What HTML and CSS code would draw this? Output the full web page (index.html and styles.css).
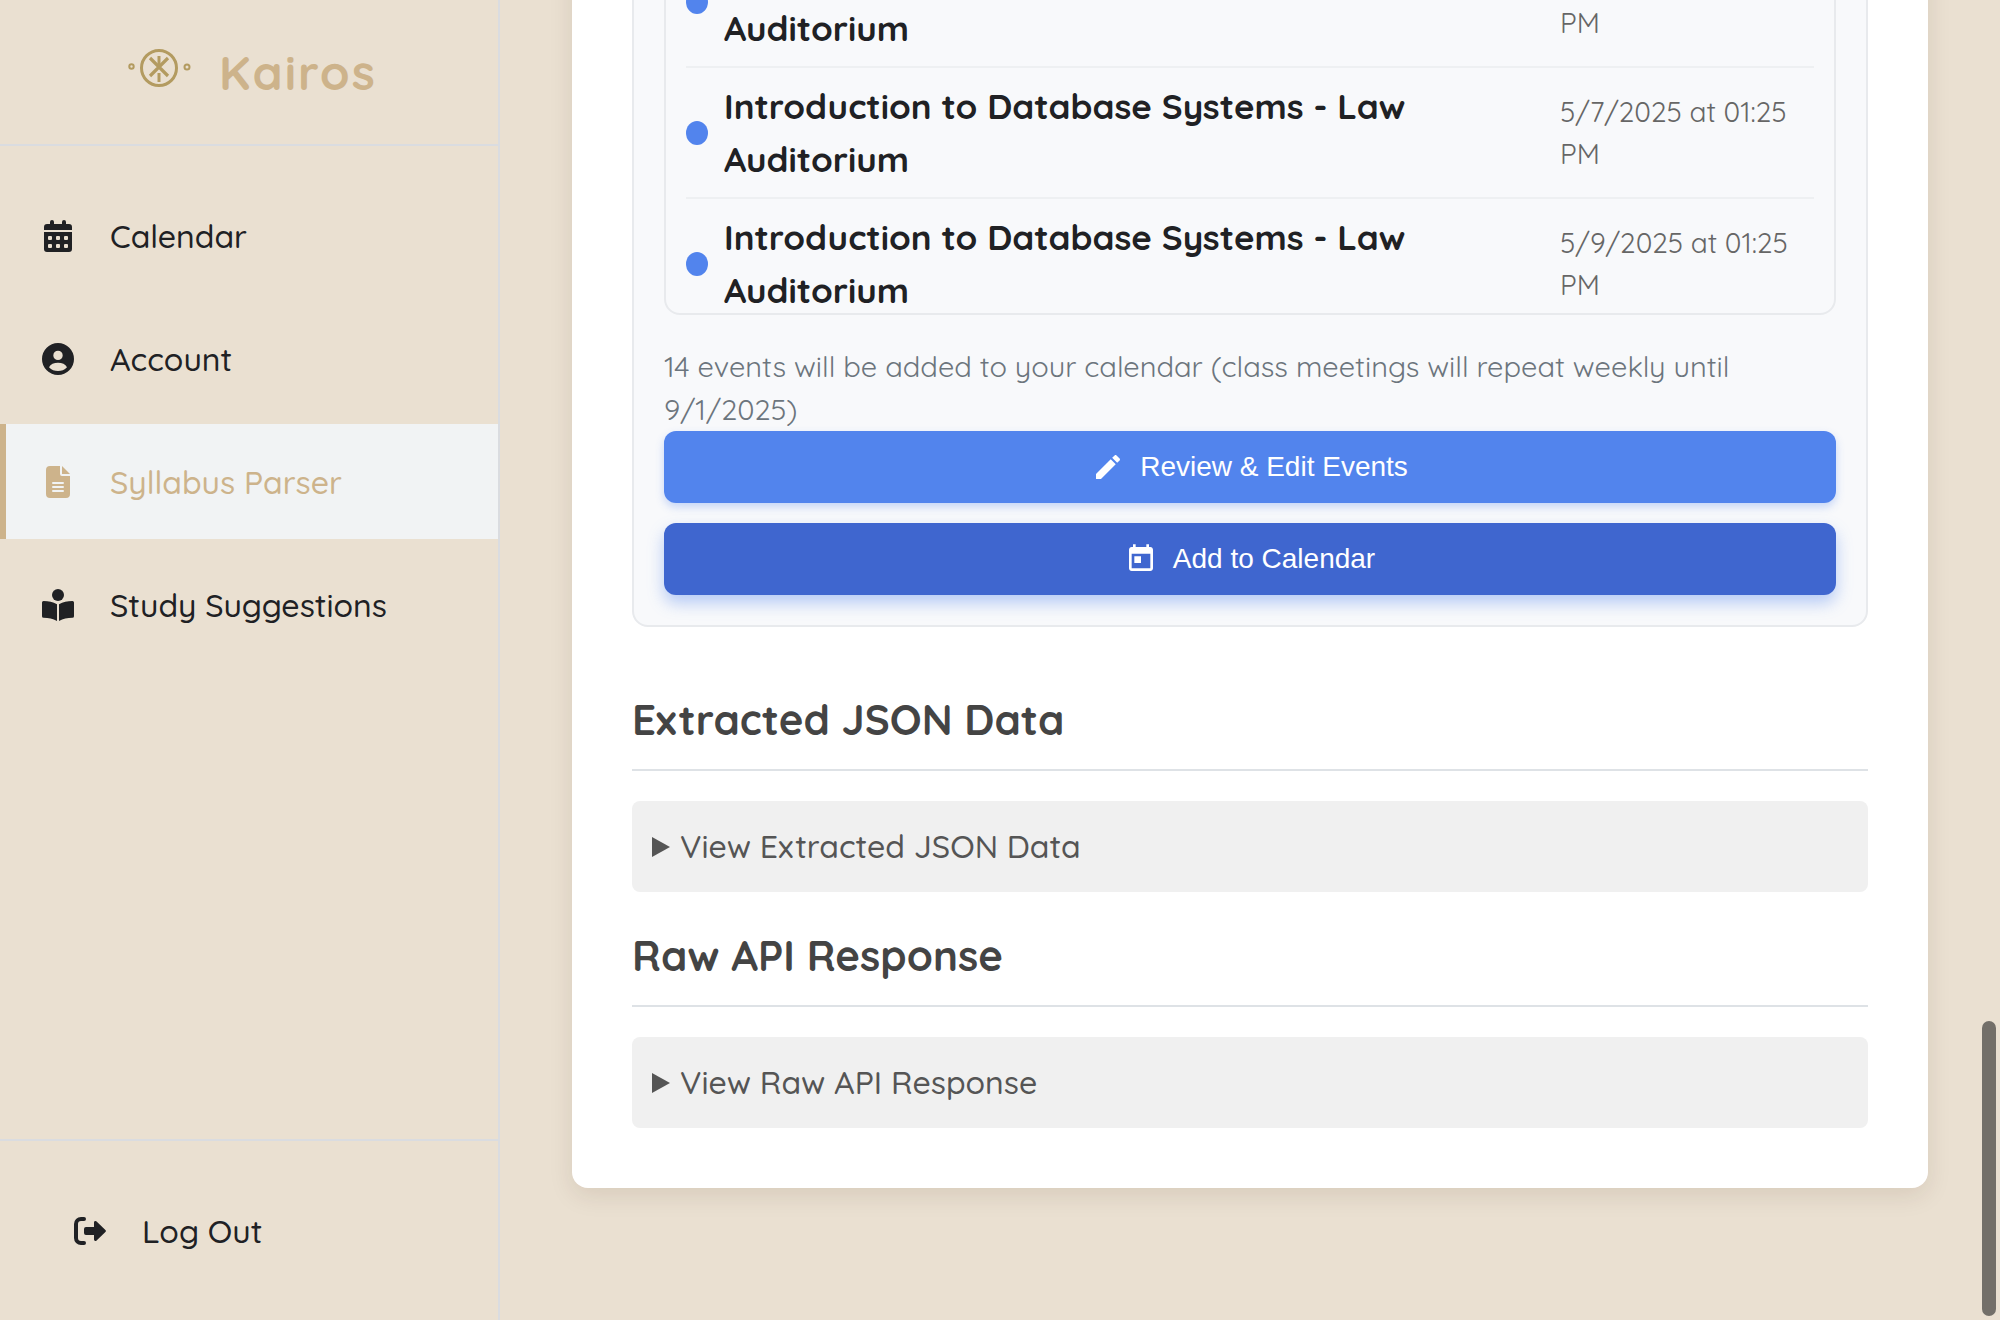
FILE: index.html
```html
<!DOCTYPE html>
<html lang="en">
<head>
<meta charset="utf-8">
<meta name="viewport" content="width=device-width, initial-scale=1">
<title>Kairos</title>
<link rel="stylesheet" href="styles.css">
</head>
<body>
<div class="app">
  <aside class="sidebar">
    <header class="brand">
      <svg class="brand-logo" viewBox="0 0 64 40" aria-hidden="true">
        <g fill="none" stroke="#b39b60">
          <circle cx="32" cy="20" r="17.5" stroke-width="3"/>
          <circle cx="4.5" cy="18.5" r="2.2" stroke-width="2"/>
          <circle cx="60" cy="19" r="2.5" stroke-width="2"/>
          <path d="M23 10 L41 28 M41 10 L23 28" stroke-width="3.2"/>
          <path d="M32 8 V19 M32 25 V34" stroke-width="3"/>
        </g>
      </svg>
      <span class="brand-name">Kairos</span>
    </header>
    <nav class="nav">
      <a class="nav-link" href="#calendar">
        <span class="nav-icon"><svg width="28" height="32" viewBox="0 0 28 32" fill="currentColor" aria-hidden="true"><path d="M6 4V2a2 2 0 0 1 4 0v2h8V2a2 2 0 0 1 4 0v2h3a3 3 0 0 1 3 3v3H0V7a3 3 0 0 1 3-3z"/><path fill-rule="evenodd" d="M0 12h28v17a3 3 0 0 1-3 3H3a3 3 0 0 1-3-3zM5 16a1 1 0 0 0-1 1v2a1 1 0 0 0 1 1h2a1 1 0 0 0 1-1v-2a1 1 0 0 0-1-1zM13 16a1 1 0 0 0-1 1v2a1 1 0 0 0 1 1h2a1 1 0 0 0 1-1v-2a1 1 0 0 0-1-1zM21 16a1 1 0 0 0-1 1v2a1 1 0 0 0 1 1h2a1 1 0 0 0 1-1v-2a1 1 0 0 0-1-1zM5 24a1 1 0 0 0-1 1v2a1 1 0 0 0 1 1h2a1 1 0 0 0 1-1v-2a1 1 0 0 0-1-1zM13 24a1 1 0 0 0-1 1v2a1 1 0 0 0 1 1h2a1 1 0 0 0 1-1v-2a1 1 0 0 0-1-1zM21 24a1 1 0 0 0-1 1v2a1 1 0 0 0 1 1h2a1 1 0 0 0 1-1v-2a1 1 0 0 0-1-1z"/></svg></span>
        Calendar
      </a>
      <a class="nav-link" href="#account">
        <span class="nav-icon"><svg width="32" height="32" viewBox="0 0 32 32" fill="currentColor" aria-hidden="true"><path fill-rule="evenodd" d="M16 0a16 16 0 1 1 0 32a16 16 0 1 1 0-32zM16 7.700a4.700 4.700 0 1 0 0 9.400a4.700 4.700 0 1 0 0-9.400zM7 24.200C8.500 21 12 19.700 16 19.700S23.500 21 25 24.200C22.500 26.900 19.500 28 16 28S9.500 26.900 7 24.200z"/></svg></span>
        Account
      </a>
      <a class="nav-link is-active" href="#syllabus" aria-current="page">
        <span class="nav-icon"><svg width="24" height="32" viewBox="0 0 24 32" fill="currentColor" aria-hidden="true"><path fill-rule="evenodd" d="M4 0H14V8a2 2 0 0 0 2 2H24V28a4 4 0 0 1-4 4H4a4 4 0 0 1-4-4V4a4 4 0 0 1 4-4zM7 16a1 1 0 0 0 0 2H17a1 1 0 0 0 0-2zM7 20a1 1 0 0 0 0 2H17a1 1 0 0 0 0-2zM7 24a1 1 0 0 0 0 2H17a1 1 0 0 0 0-2z"/><path d="M16 0l8 8h-8z"/></svg></span>
        Syllabus Parser
      </a>
      <a class="nav-link" href="#study">
        <span class="nav-icon"><svg width="32" height="32" viewBox="0 0 32 32" fill="currentColor" aria-hidden="true"><circle cx="16" cy="6" r="6"/><path d="M15 15.200V32C11 29.500 6.500 29 1.600 28.800A1.600 1.600 0 0 1 0 27.200V13.600A1.600 1.600 0 0 1 1.700 12C6.500 12.200 11 13 15 15.200zM17 15.200V32C21 29.500 25.500 29 30.400 28.800A1.600 1.600 0 0 0 32 27.200V13.600A1.600 1.600 0 0 0 30.300 12C25.500 12.200 21 13 17 15.200z"/></svg></span>
        Study Suggestions
      </a>
    </nav>
    <footer class="sidebar-footer">
      <button class="nav-link logout" type="button">
        <span class="nav-icon"><svg width="32" height="28" viewBox="0 0 32 28" aria-hidden="true"><path d="M10 2H7a5 5 0 0 0-5 5v14a5 5 0 0 0 5 5h3" fill="none" stroke="currentColor" stroke-width="4" stroke-linecap="round"/><path d="M12 10h8V5.500a1.500 1.500 0 0 1 2.600-1L31.400 13a1.400 1.400 0 0 1 0 2l-8.800 8.500a1.500 1.500 0 0 1-2.600-1V18h-8a2 2 0 0 1-2-2v-4a2 2 0 0 1 2-2z" fill="currentColor"/></svg></span>
        Log Out
      </button>
    </footer>
  </aside>

  <main class="main">
    <article class="card">
      <section class="events-panel">
        <ul class="events">
          <li class="event"><span class="event-dot"></span><strong class="event-title">Introduction to Database Systems - Law Auditorium</strong><time class="event-time">5/5/2025 at 01:25 PM</time></li>
          <li class="event"><span class="event-dot"></span><strong class="event-title">Introduction to Database Systems - Law Auditorium</strong><time class="event-time">5/7/2025 at 01:25 PM</time></li>
          <li class="event"><span class="event-dot"></span><strong class="event-title">Introduction to Database Systems - Law Auditorium</strong><time class="event-time">5/9/2025 at 01:25 PM</time></li>
        </ul>
        <p class="summary">14 events will be added to your calendar (class meetings will repeat weekly until 9/1/2025)</p>
        <div class="actions">
          <button class="action action-review" type="button">
            <svg class="action-icon" viewBox="0 0 24 24" fill="currentColor" aria-hidden="true"><path d="M3 17.250V21h3.750L17.810 9.940l-3.750-3.750L3 17.250zM20.710 7.040c.39-.39.39-1.020 0-1.410l-2.340-2.340c-.39-.39-1.020-.39-1.410 0l-1.830 1.830 3.750 3.750 1.830-1.830z"/></svg>
            Review &amp; Edit Events
          </button>
          <button class="action action-add" type="button">
            <svg class="action-icon" viewBox="0 0 24 24" fill="currentColor" aria-hidden="true"><path d="M19 3h-1V1h-2v2H8V1H6v2H5c-1.110 0-1.990.9-1.990 2L3 19c0 1.100.89 2 2 2h14c1.100 0 2-.9 2-2V5c0-1.100-.9-2-2-2zm0 16H5V8h14v11zM7 10h5v5H7z"/></svg>
            Add to Calendar
          </button>
        </div>
      </section>

      <section class="data-section data-section-first">
        <h2 class="section-title">Extracted JSON Data</h2>
        <details class="disclosure"><summary class="disclosure-label">View Extracted JSON Data</summary></details>
      </section>
      <section class="data-section">
        <h2 class="section-title">Raw API Response</h2>
        <details class="disclosure"><summary class="disclosure-label">View Raw API Response</summary></details>
      </section>
    </article>
  </main>
  <div class="scroll-thumb"></div>
</div>
</body>
</html>
```
FILE: styles.css
```css
* { box-sizing: border-box; }

body {
  margin: 0;
  background: #eae0d1;
  color: #202124;
  font-family: Quicksand, Lato, sans-serif;
  font-size: 32px;
}

.app {
  display: flex;
  height: 100vh;
  overflow: hidden;
}

/* Sidebar */
.sidebar {
  flex: 0 0 500px;
  display: flex;
  flex-direction: column;
  border-right: 2px solid #dadce0;
}

.brand {
  display: flex;
  justify-content: center;
  align-items: center;
  gap: 28px;
  height: 146px;
  padding-left: 6px;
  border-bottom: 2px solid #dadce0;
}

.brand-logo {
  width: 64px;
  height: 40px;
  margin-bottom: 8px;
}

.brand-name {
  color: #cdb38b;
  font-size: 48px;
  font-weight: 700;
  letter-spacing: 2px;
}

.nav {
  flex: 1;
  display: flex;
  flex-direction: column;
  gap: 8px;
  padding-top: 32px;
}

.nav-link {
  display: flex;
  align-items: center;
  gap: 32px;
  height: 115px;
  padding: 0 32px;
  border: 0;
  border-left: 6px solid transparent;
  background: none;
  color: inherit;
  font: inherit;
  font-size: 32px;
  font-weight: 500;
  text-decoration: none;
}

.nav-link.is-active {
  border-left-color: #cdb38b;
  background: #f1f3f4;
  color: #cdb38b;
}

.nav-icon {
  display: flex;
  justify-content: center;
  width: 40px;
}

.sidebar-footer {
  padding: 32px;
  border-top: 2px solid #dadce0;
}

.logout { width: 100%; }

/* Main column, resting at the end of its content */
.main {
  flex: 1;
  display: flex;
  flex-direction: column;
  justify-content: flex-end;
  min-width: 0;
  padding: 0 72px 132px;
}

.card {
  flex-shrink: 0;
  padding: 60px;
  border-radius: 16px;
  background: #fff;
  box-shadow: 0 8px 24px rgba(60, 30, 10, 0.1);
}

.events-panel {
  padding: 30px;
  border: 2px solid #e8eaed;
  border-radius: 16px;
  background: #f8f9fb;
}

.events {
  max-height: 400px;
  margin: 0;
  padding: 20px;
  overflow: hidden;
  border: 2px solid #e8eaed;
  border-radius: 16px;
  list-style: none;
}

.event {
  display: flex;
  align-items: center;
  gap: 16px;
  padding: 12px 0 11px;
  border-bottom: 2px solid #eef0f2;
}

.event-dot {
  flex: none;
  width: 22px;
  height: 24px;
  border-radius: 50%;
  background: #5284ed;
}

.event-title {
  flex: 1;
  font-size: 35px;
  font-weight: 700;
  line-height: 53px;
}

.event-time {
  width: 254px;
  color: #666;
  font-size: 28px;
  font-weight: 400;
  line-height: 42px;
}

.summary {
  margin: 30px 0 0;
  color: #6c757d;
  font-size: 29px;
  font-weight: 400;
  line-height: 43px;
}

.actions {
  display: flex;
  flex-direction: column;
  gap: 20px;
}

.action {
  display: flex;
  justify-content: center;
  align-items: center;
  gap: 16px;
  height: 72px;
  border: 0;
  border-radius: 12px;
  color: #fff;
  font-family: "Liberation Sans", Arial, sans-serif;
  font-size: 28px;
}

.action-icon {
  width: 32px;
  height: 32px;
}

.action-review {
  background: #5284ed;
  box-shadow: 0 4px 8px rgba(82, 132, 237, 0.3);
}

.action-add {
  background: #3f66cf;
  box-shadow: 0 8px 16px rgba(82, 132, 237, 0.4);
}

/* Data sections */
.data-section { margin-top: 31px; }

.data-section-first { margin-top: 60px; }

.section-title {
  margin: 0 0 30px;
  padding-bottom: 16px;
  border-bottom: 2px solid #dee2e6;
  color: #444;
  font-size: 42px;
  font-weight: 700;
  line-height: 66px;
}

.disclosure {
  padding: 20px;
  border-radius: 8px;
  background: #f0f0f0;
}

.disclosure-label {
  display: flex;
  align-items: center;
  gap: 10px;
  color: #555;
  font-size: 32px;
  font-weight: 500;
  line-height: 51px;
  list-style: none;
}

.disclosure-label::before {
  content: "";
  border: solid transparent;
  border-width: 10px 0 10px 18px;
  border-left-color: #555;
}

.scroll-thumb {
  position: fixed;
  right: 4px;
  bottom: 4px;
  width: 14px;
  height: 295px;
  border-radius: 7px;
  background: #736f69;
}
```
